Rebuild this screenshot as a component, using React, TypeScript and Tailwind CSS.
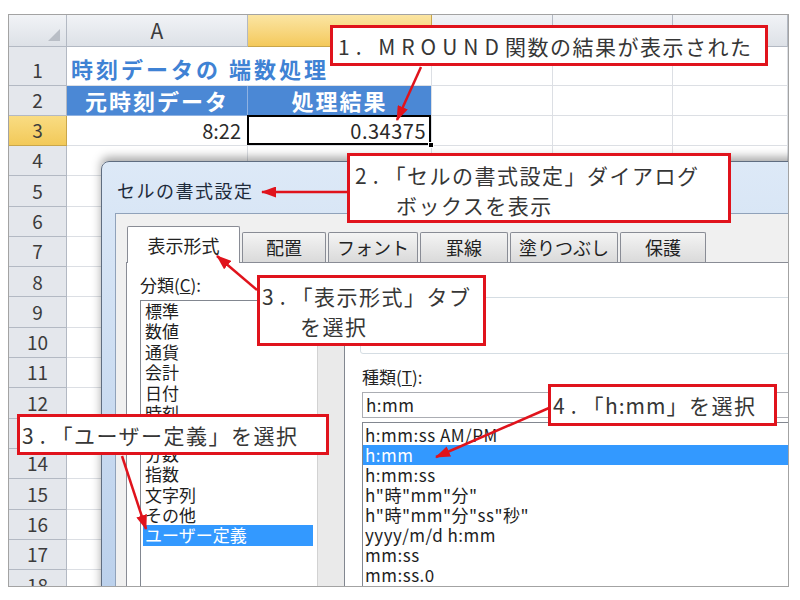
import React from "react";

const categories = [
  "標準",
  "数値",
  "通貨",
  "会計",
  "日付",
  "時刻",
  "パーセンテージ",
  "分数",
  "指数",
  "文字列",
  "その他",
  "ユーザー定義",
];

const types = [
  "h:mm:ss AM/PM",
  "h:mm",
  "h:mm:ss",
  'h"時"mm"分"',
  'h"時"mm"分"ss"秒"',
  "yyyy/m/d h:mm",
  "mm:ss",
  "mm:ss.0",
  "[h]:mm:ss",
];

function Callout({ cls, children }: { cls: string; children: React.ReactNode }) {
  return (
    <div
      className={
        "absolute z-40 bg-white border-[3px] border-[#e0131c] text-[21px] tracking-[1.5px] text-[#363636] leading-[30px] whitespace-nowrap " +
        cls
      }
    >
      {children}
    </div>
  );
}

function Num({ children }: { children: React.ReactNode }) {
  return <span className="tracking-[6px]">{children}</span>;
}

function Sheet() {
  const cell = "border-r border-b border-[#dcdfe4]";
  const rh =
    "bg-[#e4e7ec] border-r border-b border-[#b3b9c3] flex items-center justify-center text-[19px] text-[#3c3c3c]";
  const colH =
    "bg-linear-to-b from-[#f1f3f6] to-[#dde1e7] border-r border-b border-[#b3b9c3] flex items-center justify-center text-[21px] text-[#3c3c3c]";
  const rest = [];
  for (let r = 4; r <= 18; r++) {
    rest.push(
      <React.Fragment key={r}>
        <div className={rh}>{r}</div>
        <div className={cell} />
        <div className={cell} />
        <div className={cell} />
        <div className={cell} />
        <div className={cell} />
      </React.Fragment>
    );
  }
  return (
    <div className="grid grid-cols-[58px_181px_184px_121px_120px_115px] grid-rows-[32px_39px_30px_30px_repeat(15,30.3px)]">
      {/* header row */}
      <div className="relative bg-linear-to-b from-[#f1f3f6] to-[#dde1e7] border-r border-b border-[#b3b9c3]">
        <svg className="absolute right-[6px] bottom-[5px]" width="12" height="12" viewBox="0 0 12 12">
          <polygon points="12,0 12,12 0,12" fill="#b9bec6" />
        </svg>
      </div>
      <div className={colH}>A</div>
      <div className="bg-linear-to-b from-[#fbe5a2] to-[#f4c95a] border-r border-b border-[#c9a64a]" />
      <div className={colH} />
      <div className={colH} />
      <div className={colH} />

      {/* row 1 */}
      <div className={rh + " !items-end pb-[1px]"}>1</div>
      <div className="relative z-10 border-b border-[#dcdfe4] flex items-end pb-[2px] pl-[4px] whitespace-nowrap overflow-visible text-[22px] tracking-[3px] font-bold text-[#3f82d4] leading-[30px]">
        時刻データの 端数処理
      </div>
      <div className={cell} />
      <div className={cell} />
      <div className={cell} />
      <div className={cell} />

      {/* row 2 */}
      <div className={rh}>2</div>
      <div className="bg-[#4b88d5] border-r border-b border-[#8fb2e2] flex items-center justify-center text-white font-bold text-[22px] tracking-[2px]">
        元時刻データ
      </div>
      <div className="bg-[#4b88d5] border-r border-b border-[#dcdfe4] flex items-center justify-center text-white font-bold text-[22px] tracking-[2px]">
        処理結果
      </div>
      <div className={cell} />
      <div className={cell} />
      <div className={cell} />

      {/* row 3 */}
      <div className="bg-linear-to-b from-[#f9dc82] to-[#f2c958] border-r border-b border-[#c9a64a] flex items-center justify-center text-[19px] text-[#3c3c3c]">
        3
      </div>
      <div className={cell + " flex items-center justify-end pr-[6px] text-[20px] text-[#2a2a2a]"}>8:22</div>
      <div className={cell + " relative flex items-center justify-end pr-[5px] text-[20px] tracking-[0.5px] text-[#2a2a2a]"}>
        0.34375
        <div className="absolute -left-[1px] -top-[1px] right-0 bottom-0 border-[2px] border-black" />
        <div className="absolute -right-[3px] -bottom-[3px] w-[6px] h-[6px] bg-black border border-white" />
      </div>
      <div className={cell} />
      <div className={cell} />
      <div className={cell} />
      {rest}
    </div>
  );
}

function Dialog() {
  const tabBase =
    "h-[30px] mb-[1px] ml-[2px] flex items-center justify-center border border-[#898c95] border-b-0 rounded-t-[2px] bg-linear-to-b from-[#f4f4f4] to-[#dadada] text-[18px] text-[#222]";
  return (
    <div className="absolute left-[92px] top-[146px] z-20 w-[720px] h-[460px] rounded-tl-[8px] border border-[#5f6d80] bg-linear-to-b from-[#dde9f7] via-[#cbdcf1] to-[#b9cfeb] shadow-[0_-4px_10px_rgba(0,0,0,0.35)]">
      <div className="h-[51px] pl-[15px] pt-[5px] flex items-center text-[18px] tracking-[1.5px] text-[#1e2b3b]">
        セルの書式設定
      </div>
      <div className="ml-[13px] h-[400px] border-l border-t border-[#90a2ba] bg-[#f0f0f0] pl-[10px] pt-[12px]">
        <div className="relative z-10 ml-[1px] flex items-end h-[37px]">
          <div className="h-[37px] w-[113px] flex items-center justify-center pt-[1px] border border-[#898c95] border-b-0 rounded-t-[2px] bg-white text-[18px] text-[#222]">
            表示形式
          </div>
          <div className={tabBase + " w-[84px]"}>配置</div>
          <div className={tabBase + " w-[90px]"}>フォント</div>
          <div className={tabBase + " w-[88px]"}>罫線</div>
          <div className={tabBase + " w-[108px]"}>塗りつぶし</div>
          <div className={tabBase + " w-[86px]"}>保護</div>
        </div>
        <div className="-mt-px h-[340px] border border-[#898c95] bg-white flex items-start">
          {/* left column */}
          <div className="ml-[13px] w-[205px] flex flex-col">
            <div className="mt-[12px] h-[20px] leading-[20px] text-[17px] text-[#222]">
              分類(<span className="underline">C</span>):
            </div>
            <div className="mt-[5px] h-[300px] border border-[#828790] bg-white flex">
              <div className="w-[176px] pl-[2px] pr-[4px] pt-0 text-[17px] text-[#1e1e1e]">
                {categories.map((c) => (
                  <div
                    key={c}
                    className={
                      c === "ユーザー定義"
                        ? "h-[20.4px] leading-[20.4px] pl-[2px] bg-[#3399ff] text-white whitespace-nowrap"
                        : "h-[20.4px] leading-[20.4px] pl-[2px] whitespace-nowrap"
                    }
                  >
                    {c}
                  </div>
                ))}
              </div>
              <div className="flex-1 bg-[#eaeaea] border-l border-[#d2d2d2]" />
            </div>
          </div>
          {/* right column */}
          <div className="ml-[15px] w-[440px] pt-[34px] flex flex-col">
            <div className="h-[57px] border border-[#d5dde3] rounded-[3px]" />
            <div className="mt-[13px] ml-[2px] h-[20px] leading-[20px] text-[17px] text-[#222]">
              種類(<span className="underline">T</span>):
            </div>
            <div className="mt-[5px] ml-[2px] h-[26px] border border-[#abadb3] bg-white flex items-center pl-[3px] text-[17px] tracking-[0.5px] text-[#1e1e1e]">
              h:mm
            </div>
            <div className="mt-[4px] ml-[2px] h-[200px] border border-[#828790] bg-white pt-[2px] text-[17px] tracking-[0.5px] text-[#1e1e1e]">
              {types.map((t) => (
                <div
                  key={t}
                  className={
                    t === "h:mm"
                      ? "h-[20px] leading-[20px] pl-[2px] bg-[#3399ff] text-white whitespace-nowrap"
                      : "h-[20px] leading-[20px] pl-[2px] whitespace-nowrap"
                  }
                >
                  {t}
                </div>
              ))}
            </div>
          </div>
        </div>
      </div>
    </div>
  );
}

export default function App() {
  return (
    <div className="relative w-[800px] h-[600px] overflow-hidden bg-white pt-[14px] pl-[8px] font-['Noto_Sans_CJK_JP','Noto_Sans_CJK_SC',sans-serif]">
      <div className="relative w-[781px] h-[573px] border border-[#a3a3a3] overflow-hidden bg-white">
        <Sheet />
        <Dialog />
      </div>

      <Callout cls="left-[330px] top-[25px] w-[438px] h-[41px] flex items-center pl-[5px]">
        <span>
          <Num>1. MROUND</Num>関数の結果が表示された
        </span>
      </Callout>

      <Callout cls="left-[347px] top-[153px] w-[384px] h-[70px] pl-[5px] pt-[4px]">
        <div>
          <Num>2.</Num>「セルの書式設定」ダイアログ
        </div>
        <div className="pl-[41px]">ボックスを表示</div>
      </Callout>

      <Callout cls="left-[257px] top-[275px] w-[229px] h-[71px] pl-[2px] pt-[3px]">
        <div>
          <Num>3.</Num>「表示形式」タブ
        </div>
        <div className="pl-[38px]">を選択</div>
      </Callout>

      <Callout cls="left-[17px] top-[414px] w-[312px] h-[41px] flex items-center pl-[2px]">
        <span>
          <Num>3.</Num>「ユーザー定義」を選択
        </span>
      </Callout>

      <Callout cls="left-[548px] top-[384px] w-[229px] h-[42px] flex items-center pl-[2px]">
        <span>
          <Num>4.</Num>「<span className="tracking-[1px]">h:mm</span>」を選択
        </span>
      </Callout>

      <svg
        className="absolute left-0 top-0 z-50 pointer-events-none"
        width="800"
        height="600"
        viewBox="0 0 800 600"
      >
        <defs>
          <marker
            id="ah"
            markerUnits="userSpaceOnUse"
            markerWidth="15"
            markerHeight="11"
            refX="14"
            refY="5.5"
            orient="auto"
          >
            <path d="M0,0 L15,5.5 L0,11 Z" fill="#e0131c" />
          </marker>
        </defs>
        <g stroke="#e0131c" strokeWidth="2.5" fill="none" markerEnd="url(#ah)">
          <line x1="421" y1="67" x2="397" y2="120" />
          <line x1="347" y1="192" x2="262" y2="192" />
          <line x1="257" y1="290" x2="217" y2="256" />
          <line x1="122" y1="456" x2="146" y2="529" />
          <line x1="549" y1="408" x2="436" y2="457" />
        </g>
      </svg>
    </div>
  );
}
